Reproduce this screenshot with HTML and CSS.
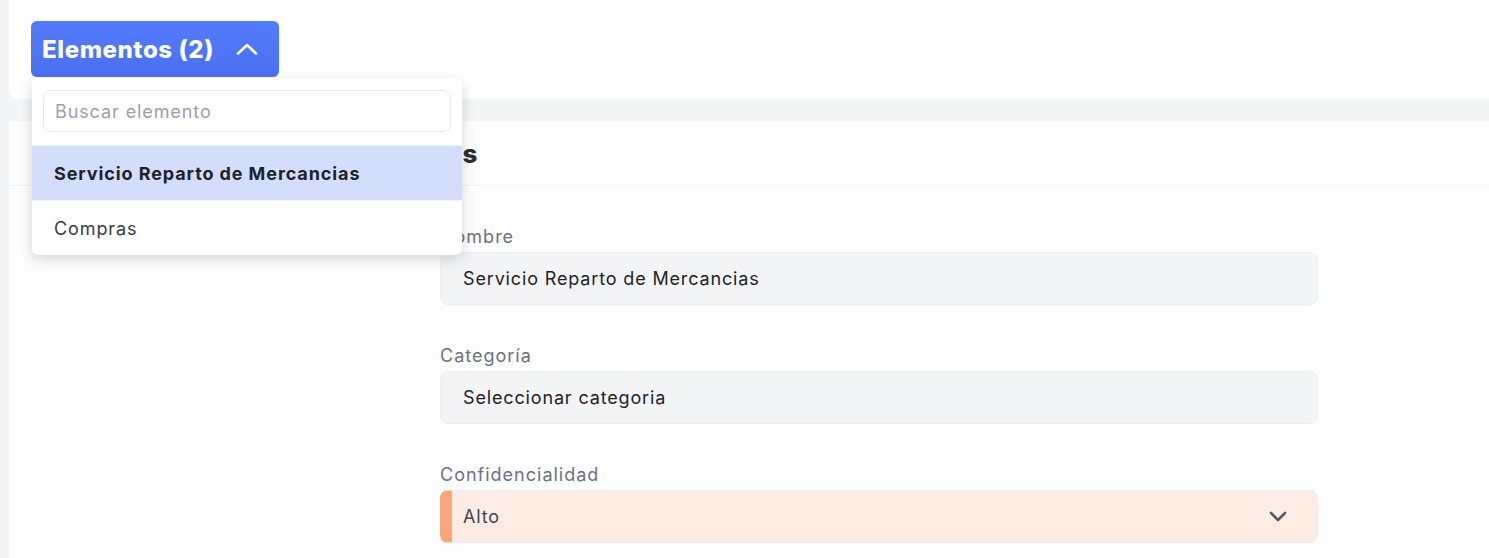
FILE: index.html
```html
<!DOCTYPE html>
<html lang="es">
<head>
    <meta charset="UTF-8">
    <meta name="viewport" content="width=device-width, initial-scale=1.0">
    <title>Elementos</title>
    <link rel="stylesheet" href="styles.css">
</head>
<body>
    <div id="page">
        <div id="top-card">
            <div class="picker">
                <button class="picker-btn">
                    <span>Elementos (2)</span>
                    <svg width="22" height="12" viewBox="0 0 22 12"><path d="M2 10.5 L11 2 L20 10.5" fill="none" stroke="#fff" stroke-width="2.6" stroke-linecap="round" stroke-linejoin="round"/></svg>
                </button>
                <div class="picker-menu">
                    <div class="picker-search">
                        <input type="text" placeholder="Buscar elemento">
                    </div>
                    <div class="picker-item selected">Servicio Reparto de Mercancias</div>
                    <div class="picker-item">Compras</div>
                </div>
            </div>
        </div>

        <div id="main-card">
            <div class="card-header">
                <h2 class="card-title">Datos generales</h2>
            </div>
            <div class="card-body">
                <div class="side"></div>
                <div class="form">
                    <div class="field">
                        <label>Nombre</label>
                        <div class="input">Servicio Reparto de Mercancias</div>
                    </div>
                    <div class="field">
                        <label>Categoría</label>
                        <div class="input">Seleccionar categoria</div>
                    </div>
                    <div class="field">
                        <label>Confidencialidad</label>
                        <div class="input select level-high">
                            <span>Alto</span>
                            <svg width="18" height="11" viewBox="0 0 18 11"><path d="M2 2 L9 9 L16 2" fill="none" stroke="#555b65" stroke-width="2.6" stroke-linecap="round" stroke-linejoin="round"/></svg>
                        </div>
                    </div>
                </div>
            </div>
        </div>
    </div>
</body>
</html>
```
FILE: styles.css
```css
body {
    margin: 0;
    font-family: 'Inter', 'Open Sans', sans-serif;
    background-color: #f4f5f7;
    color: #222;
    overflow: hidden;
}

#page {
    padding-left: 9px;
}

#top-card {
    background-color: #fff;
    height: 99px;
    box-sizing: border-box;
    padding: 21px 0 0 22px;
    border-bottom-left-radius: 10px;
    position: relative;
    z-index: 2;
}

.picker {
    position: relative;
    display: inline-block;
}

.picker-btn {
    display: flex;
    align-items: center;
    gap: 22px;
    width: 248px;
    height: 56px;
    padding: 0 11px;
    border: none;
    border-radius: 6px;
    background: linear-gradient(180deg, #527bfb, #4b70f2);
    color: #fff;
    font-family: inherit;
    font-size: 24px;
    font-weight: 800;
    letter-spacing: 0.6px;
    cursor: pointer;
}

.picker-menu {
    position: absolute;
    top: 57px;
    left: 1px;
    width: 430px;
    background-color: #fff;
    border-radius: 6px;
    box-shadow: 0 4px 14px rgba(0, 0, 0, 0.16);
    overflow: hidden;
}

.picker-search {
    padding: 12px 11px 13px;
}

.picker-search input {
    width: 100%;
    box-sizing: border-box;
    height: 42px;
    padding: 0 11px;
    border: 1px solid #e8e9ec;
    border-radius: 7px;
    font-family: inherit;
    font-size: 18px;
    letter-spacing: 0.9px;
    outline: none;
}

.picker-search input::placeholder {
    color: #9aa1ad;
}

.picker-item {
    height: 54px;
    display: flex;
    align-items: center;
    padding: 0 22px;
    font-size: 18px;
    letter-spacing: 0.9px;
    color: #3a3d42;
    border-top: 1px solid #eef0f3;
}

.picker-item.selected {
    background-color: #d3defc;
    color: #1f2229;
    font-weight: 700;
}

#main-card {
    margin-top: 22px;
    background-color: #fdfdfd;
    height: calc(100vh - 121px);
}

.card-header {
    height: 65px;
    box-sizing: border-box;
    border-bottom: 1px solid #f0f1f3;
    display: flex;
    align-items: center;
    padding-left: 246px;
}

.card-title {
    margin: 0;
    font-size: 26px;
    font-weight: 800;
    letter-spacing: 1px;
    color: #2a2d33;
}

.card-body {
    display: grid;
    grid-template-columns: 431px 878px;
    padding-top: 39px;
}

.field {
    margin-bottom: 39px;
}

.field:last-child {
    margin-bottom: 0;
}

.field label {
    display: block;
    font-size: 18px;
    line-height: 24px;
    letter-spacing: 1px;
    color: #6b7280;
    margin-bottom: 3px;
}

.input {
    height: 53px;
    box-sizing: border-box;
    display: flex;
    align-items: center;
    padding: 0 22px;
    background-color: #f3f4f6;
    border: 1px solid #eceef1;
    border-radius: 8px;
    font-size: 18px;
    letter-spacing: 0.85px;
    color: #1f2229;
}

.select {
    justify-content: space-between;
    padding-right: 30px;
}

.level-high {
    background-color: #fdece4;
    border-left: 12px solid #f9a77a;
    padding-left: 11px;
    color: #3f4550;
}
```
